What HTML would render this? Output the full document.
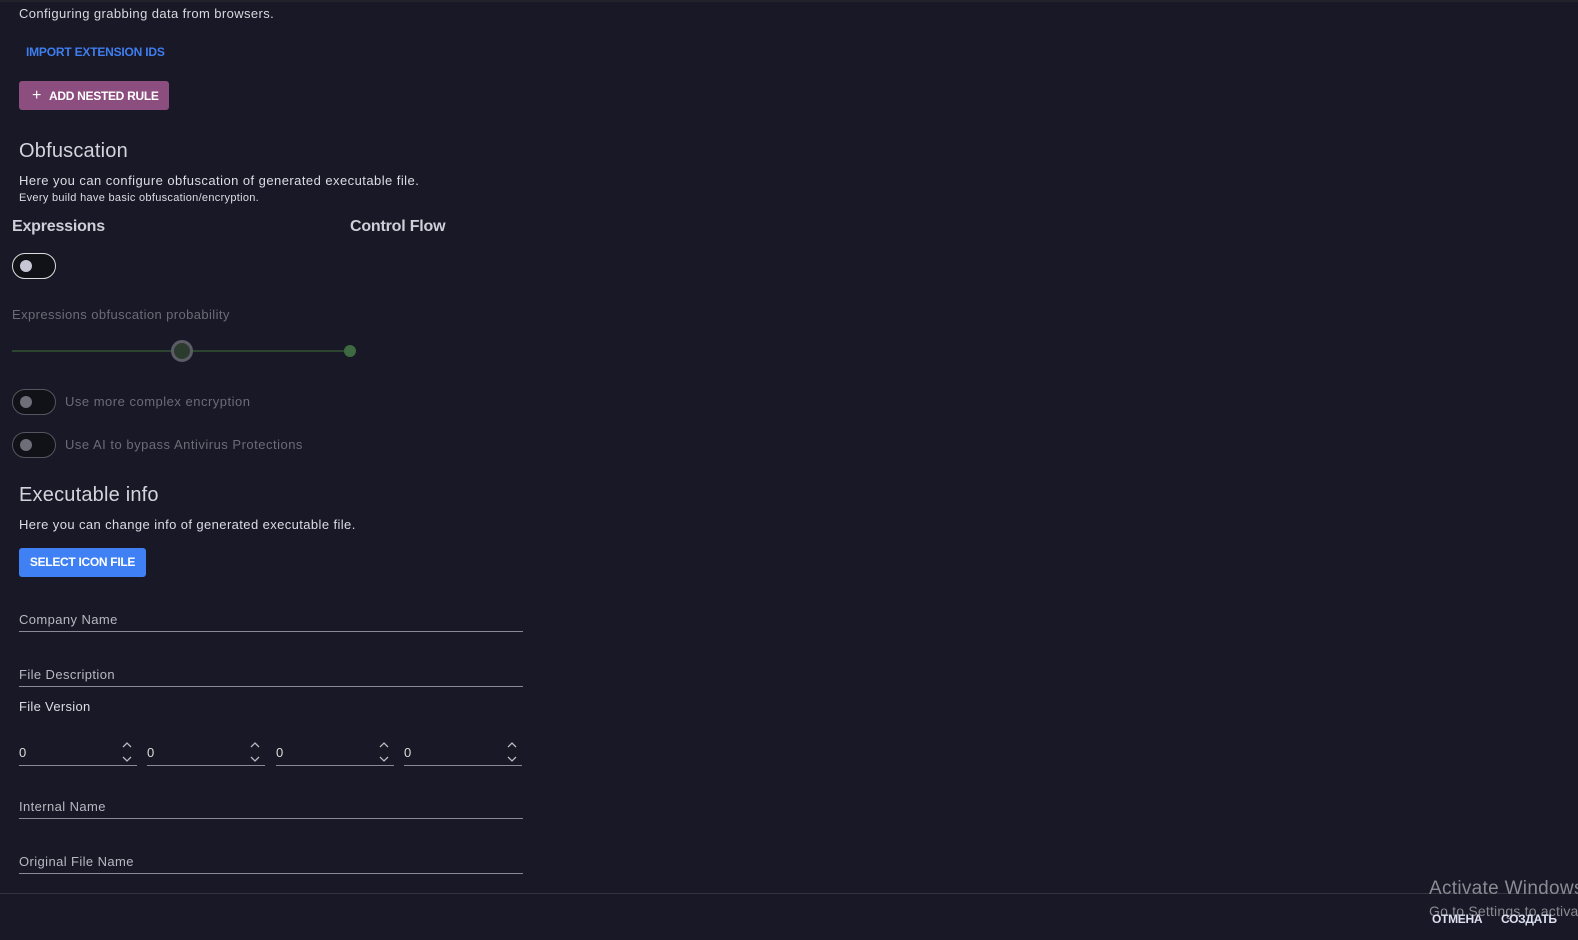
<!DOCTYPE html>
<html><head><meta charset="utf-8"><style>
*{box-sizing:border-box;margin:0;padding:0}
body{width:1578px;height:940px;background:#181826;font-family:"Liberation Sans",Arial,sans-serif;color:#e4e4ea;position:relative;overflow:hidden;letter-spacing:0.2px}
.a{position:absolute;white-space:nowrap}
.sw{position:absolute;width:44px;height:26px;border:1.5px solid #ddd;border-radius:13px;background:#111118}
.sw i{position:absolute;left:7px;top:6px;width:12px;height:12px;border-radius:50%;background:#c8c6d4}
.sw.d{border-color:#55555f}.sw.d i{background:#6f6e78}
.fld{position:absolute;left:19px;width:504px;border-bottom:1px solid #8a8a94;height:1px}
.lbl{font-size:13px;color:#b8b8c2}
.num{position:absolute;top:742px;width:118px;height:24px;border-bottom:1px solid #8a8a94;font-size:13px;color:#ddd}
.num span{position:absolute;left:0;top:3px}
.num svg{position:absolute;right:4px;top:-2px}
</style></head><body>
<div class="a" style="left:0;top:0;width:1578px;height:2px;background:#22222a"></div>
<div class="a" style="left:19px;top:6px;font-size:13px;color:#d8d8e0;letter-spacing:0.4px">Configuring grabbing data from browsers.</div>
<div class="a" style="left:26px;top:45px;font-size:12px;font-weight:bold;color:#3f7ef0;letter-spacing:-0.2px">IMPORT EXTENSION IDS</div>
<div class="a" style="left:19px;top:81px;width:150px;height:29px;background:#8c4e7e;border-radius:3px;font-size:12px;font-weight:bold;color:#fff;line-height:29px;padding-left:13px;letter-spacing:-0.3px"><span style="font-size:16px;font-weight:normal;margin-right:8px">+</span>ADD NESTED RULE</div>
<div class="a" style="left:19px;top:140px;font-size:20px;color:#d4d4dc">Obfuscation</div>
<div class="a" style="left:19px;top:173px;font-size:13px;color:#dcdce4;letter-spacing:0.45px">Here you can configure obfuscation of generated executable file.</div>
<div class="a" style="left:19px;top:192px;font-size:11px;color:#dcdce4;letter-spacing:0.3px">Every build have basic obfuscation/encryption.</div>
<div class="a" style="left:12px;top:218px;font-size:16px;font-weight:bold;color:#cfcfd8;letter-spacing:-0.2px">Expressions</div>
<div class="a" style="left:350px;top:218px;font-size:16px;font-weight:bold;color:#cfcfd8;letter-spacing:-0.2px">Control Flow</div>
<div class="sw" style="left:12px;top:253px"><i></i></div>
<div class="a" style="left:12px;top:307px;font-size:13px;color:#6c6c78;letter-spacing:0.4px">Expressions obfuscation probability</div>
<div class="a" style="left:12px;top:350px;width:338px;height:2px;background:#2c4430"></div>
<div class="a" style="left:171px;top:340px;width:22px;height:22px;border-radius:50%;background:#2b3b2e;border:3px solid #5c5c66"></div>
<div class="a" style="left:344px;top:345px;width:12px;height:12px;border-radius:50%;background:#3d6a40"></div>
<div class="sw d" style="left:12px;top:389px"><i></i></div>
<div class="a" style="left:65px;top:394px;font-size:13px;color:#6c6c78;letter-spacing:0.5px">Use more complex encryption</div>
<div class="sw d" style="left:12px;top:432px"><i></i></div>
<div class="a" style="left:65px;top:437px;font-size:13px;color:#6c6c78;letter-spacing:0.5px">Use AI to bypass Antivirus Protections</div>
<div class="a" style="left:19px;top:484px;font-size:20px;color:#d4d4dc">Executable info</div>
<div class="a" style="left:19px;top:517px;font-size:13px;color:#dcdce4;letter-spacing:0.4px">Here you can change info of generated executable file.</div>
<div class="a" style="left:19px;top:548px;width:127px;height:29px;background:#3f80f5;border-radius:3px;font-size:12px;font-weight:bold;color:#fff;line-height:29px;text-align:center;letter-spacing:-0.3px">SELECT ICON FILE</div>
<div class="a lbl" style="left:19px;top:612px;letter-spacing:0.4px">Company Name</div><div class="fld" style="top:631px"></div>
<div class="a lbl" style="left:19px;top:667px;letter-spacing:0.4px">File Description</div><div class="fld" style="top:686px"></div>
<div class="a" style="left:19px;top:699px;font-size:13px;color:#dcdce4;letter-spacing:0.3px">File Version</div>
<div class="num" style="left:19px"><span>0</span><svg width="12" height="26" viewBox="0 0 12 26" fill="none" stroke="#bbb" stroke-width="1.3"><path d="M2 7l4-4 4 4M2 17l4 4 4-4"/></svg></div>
<div class="num" style="left:147px"><span>0</span><svg width="12" height="26" viewBox="0 0 12 26" fill="none" stroke="#bbb" stroke-width="1.3"><path d="M2 7l4-4 4 4M2 17l4 4 4-4"/></svg></div>
<div class="num" style="left:276px"><span>0</span><svg width="12" height="26" viewBox="0 0 12 26" fill="none" stroke="#bbb" stroke-width="1.3"><path d="M2 7l4-4 4 4M2 17l4 4 4-4"/></svg></div>
<div class="num" style="left:404px"><span>0</span><svg width="12" height="26" viewBox="0 0 12 26" fill="none" stroke="#bbb" stroke-width="1.3"><path d="M2 7l4-4 4 4M2 17l4 4 4-4"/></svg></div>
<div class="a lbl" style="left:19px;top:799px;letter-spacing:0.4px">Internal Name</div><div class="fld" style="top:818px"></div>
<div class="a lbl" style="left:19px;top:854px;letter-spacing:0.4px">Original File Name</div><div class="fld" style="top:873px"></div>
<div class="a" style="left:0;top:893px;width:1578px;height:1px;background:#34343e"></div>
<div class="a" style="left:1429px;top:878px;font-size:19px;color:#8a8a92;letter-spacing:0.3px">Activate Windows</div>
<div class="a" style="left:1429px;top:903px;font-size:14px;color:#8a8a92">Go to Settings to activate</div>
<div class="a" style="left:1432px;top:912px;font-size:12px;font-weight:bold;color:#dde0f0;letter-spacing:-0.3px">ОТМЕНА</div>
<div class="a" style="left:1501px;top:912px;font-size:12px;font-weight:bold;color:#dde0f0;letter-spacing:-0.3px">СОЗДАТЬ</div>
</body></html>
